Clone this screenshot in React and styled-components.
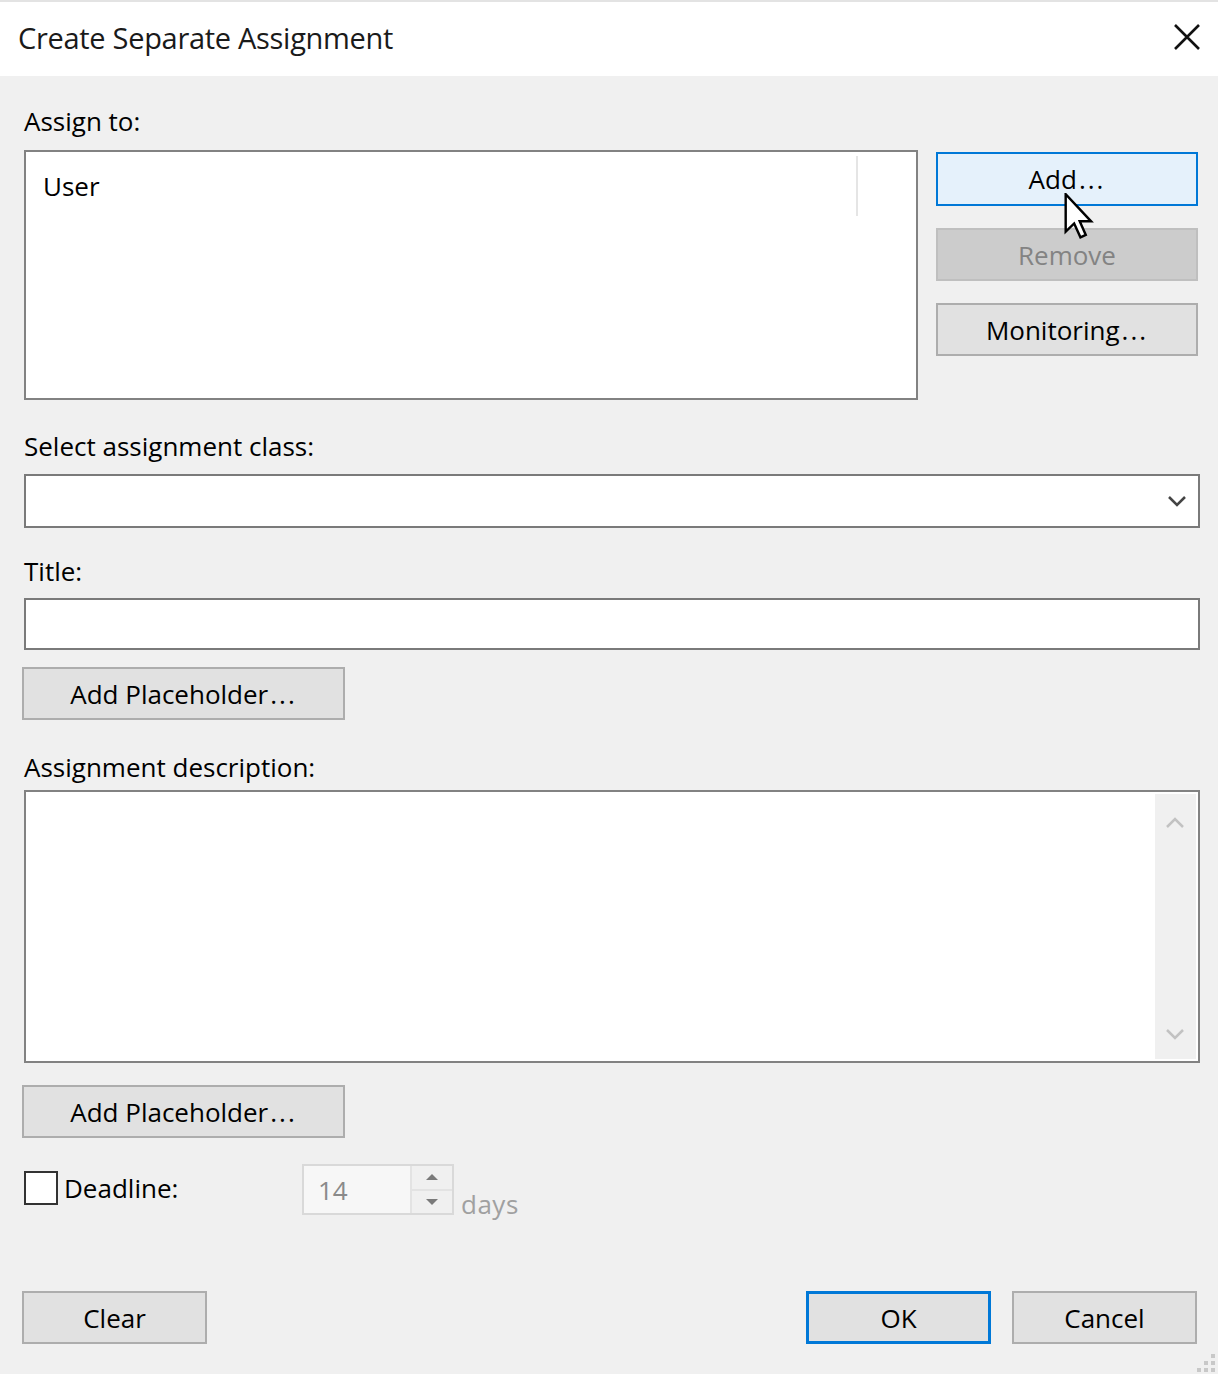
import styled, { createGlobalStyle } from "styled-components";

const GlobalStyle = createGlobalStyle`
  html, body {
    margin: 0;
    padding: 0;
    background: #f0f0f0;
  }
  * {
    box-sizing: border-box;
  }
`;

const Window = styled.div`
  position: relative;
  width: 1218px;
  height: 1374px;
  display: flex;
  flex-direction: column;
  background: #f0f0f0;
  font-family: "Open Sans", "Noto Sans", sans-serif;
  color: #000;
  overflow: hidden;
`;

const TitleBar = styled.div`
  height: 76px;
  flex: none;
  display: flex;
  align-items: center;
  justify-content: space-between;
  background: #fff;
  border-top: 2px solid #e3e3e3;
  padding: 0 16px 0 18px;
`;

const TitleText = styled.div`
  font-size: 29px;
  letter-spacing: -0.3px;
  color: #1a1a1a;
  margin-top: -4px;
`;

const CloseButton = styled.div`
  width: 30px;
  height: 30px;
  display: flex;
  align-items: center;
  justify-content: center;
  margin-top: -4px;
`;

const Body = styled.div`
  flex: 1;
  display: flex;
  flex-direction: column;
  padding: 27px 18px 0 24px;
`;

const Label = styled.div`
  font-size: 26px;
  line-height: 36px;
  height: 36px;
  margin-top: ${(p) => p.$mt || 0}px;
  margin-bottom: ${(p) => p.$mb || 0}px;
`;

const Dots = styled.span`
  letter-spacing: 2px;
  margin-left: 2px;
`;

const TopRow = styled.div`
  display: flex;
  gap: 18px;
  align-items: flex-start;
`;

const ListBox = styled.div`
  position: relative;
  width: 894px;
  height: 250px;
  background: #fff;
  border: 2px solid #828282;
  padding: 16px 0 0 17px;
  font-size: 26px;
`;

const ColumnSeparator = styled.div`
  position: absolute;
  left: 830px;
  top: 4px;
  width: 2px;
  height: 60px;
  background: #e5e5e5;
`;

const SideButtons = styled.div`
  display: flex;
  flex-direction: column;
  gap: 22px;
  padding-top: 2px;
  position: relative;
`;

const Button = styled.div`
  width: ${(p) => p.$w || 262}px;
  height: ${(p) => p.$h || 53}px;
  display: flex;
  align-items: center;
  justify-content: center;
  font-size: 26px;
  background: ${(p) =>
    p.$hover ? "#e5f1fb" : p.$disabled ? "#cccccc" : "#e1e1e1"};
  border: ${(p) =>
    p.$hover
      ? "2px solid #0078d7"
      : p.$default
      ? "3px solid #0078d7"
      : p.$disabled
      ? "2px solid #bfbfbf"
      : "2px solid #adadad"};
  color: ${(p) => (p.$disabled ? "#838383" : "#000")};
`;

const Cursor = styled.svg`
  position: absolute;
  left: 128px;
  top: 43px;
`;

const ComboBox = styled.div`
  height: 54px;
  background: #fff;
  border: 2px solid #7a7a7a;
  display: flex;
  align-items: center;
  justify-content: flex-end;
  padding-right: 10px;
`;

const TextInput = styled.div`
  height: 52px;
  background: #fff;
  border: 2px solid #7a7a7a;
`;

const PlaceholderRow = styled.div`
  margin-left: -2px;
  margin-top: ${(p) => p.$mt || 0}px;
`;

const TextArea = styled.div`
  height: 273px;
  background: #fff;
  border: 2px solid #828282;
  display: flex;
  justify-content: flex-end;
  padding: 2px;
`;

const ScrollBar = styled.div`
  width: 41px;
  background: #f0f0f0;
  display: flex;
  flex-direction: column;
  justify-content: space-between;
  align-items: center;
  padding: 18px 2px 14px 0;
`;

const DeadlineRow = styled.div`
  display: flex;
  align-items: flex-start;
  margin-top: 26px;
  height: 52px;
`;

const CheckLabel = styled.div`
  display: flex;
  align-items: center;
  gap: 6px;
  width: 278px;
  margin-top: 6px;
  font-size: 26px;
`;

const CheckBox = styled.div`
  width: 34px;
  height: 34px;
  background: #fff;
  border: 2px solid #333;
`;

const Spinner = styled.div`
  width: 152px;
  height: 51px;
  display: flex;
  border: 2px solid #d9d9d9;
  background: #f7f7f7;
`;

const SpinValue = styled.div`
  flex: 1;
  display: flex;
  align-items: center;
  padding-left: 14px;
  font-size: 26px;
  color: #8a8a8a;
`;

const SpinButtons = styled.div`
  width: 42px;
  display: flex;
  flex-direction: column;
  background: #f0f0f0;
  border-left: 2px solid #e3e3e3;
`;

const SpinHalf = styled.div`
  flex: 1;
  display: flex;
  align-items: center;
  justify-content: center;
  border-top: ${(p) => (p.$lower ? "2px solid #e3e3e3" : "none")};
`;

const Days = styled.div`
  font-size: 26px;
  color: #a0a0a0;
  margin: 22px 0 0 7px;
  letter-spacing: 0.5px;
`;

const Footer = styled.div`
  display: flex;
  align-items: center;
  margin: 75px 3px 0 -2px;
`;

const Spacer = styled.div`
  flex: 1;
`;

const FooterRight = styled.div`
  display: flex;
  gap: 21px;
`;

const SizeGrip = styled.svg`
  position: absolute;
  right: 0;
  bottom: 0;
`;

function Chevron({ dir = "down", color = "#444", size = 22 }) {
  const d = dir === "down" ? "M3 7 L11 15 L19 7" : "M3 15 L11 7 L19 15";
  return (
    <svg width={size} height={size} viewBox="0 0 22 22">
      <path d={d} fill="none" stroke={color} strokeWidth="2.5" />
    </svg>
  );
}

function Triangle({ up }) {
  return (
    <svg width="14" height="8" viewBox="0 0 14 8">
      <path d={up ? "M1 7 L7 1 L13 7 Z" : "M1 1 L7 7 L13 1 Z"} fill="#7a7a7a" />
    </svg>
  );
}

export default function App() {
  return (
    <>
      <GlobalStyle />
      <Window>
        <TitleBar>
          <TitleText>Create Separate Assignment</TitleText>
          <CloseButton>
            <svg width="28" height="28" viewBox="0 0 28 28">
              <path d="M2 2 L26 26 M26 2 L2 26" stroke="#111" strokeWidth="2.6" />
            </svg>
          </CloseButton>
        </TitleBar>

        <Body>
          <Label $mb={11}>Assign to:</Label>
          <TopRow>
            <ListBox>
              User
              <ColumnSeparator />
            </ListBox>
            <SideButtons>
              <Button $hover $h={54}>
                Add<Dots>...</Dots>
              </Button>
              <Button $disabled>Remove</Button>
              <Button>
                Monitoring<Dots>...</Dots>
              </Button>
              <Cursor width="30" height="46" viewBox="0 0 12 19">
                <path
                  d="M0.5 0.5 L0.5 16 L4 12.6 L6.6 18.3 L8.8 17.3 L6.3 11.7 L11 11.7 Z"
                  fill="#fff"
                  stroke="#000"
                  strokeWidth="1"
                  strokeLinejoin="miter"
                />
              </Cursor>
            </SideButtons>
          </TopRow>

          <Label $mt={28} $mb={10}>Select assignment class:</Label>
          <ComboBox>
            <Chevron dir="down" color="#444" />
          </ComboBox>

          <Label $mt={25} $mb={9}>Title:</Label>
          <TextInput />

          <PlaceholderRow $mt={17}>
            <Button $w={323}>
              Add Placeholder<Dots>...</Dots>
            </Button>
          </PlaceholderRow>

          <Label $mt={29} $mb={5}>Assignment description:</Label>
          <TextArea>
            <ScrollBar>
              <Chevron dir="up" color="#c2c2c2" />
              <Chevron dir="down" color="#c2c2c2" />
            </ScrollBar>
          </TextArea>

          <PlaceholderRow $mt={22}>
            <Button $w={323}>
              Add Placeholder<Dots>...</Dots>
            </Button>
          </PlaceholderRow>

          <DeadlineRow>
            <CheckLabel>
              <CheckBox />
              Deadline:
            </CheckLabel>
            <Spinner>
              <SpinValue>14</SpinValue>
              <SpinButtons>
                <SpinHalf>
                  <Triangle up />
                </SpinHalf>
                <SpinHalf $lower>
                  <Triangle />
                </SpinHalf>
              </SpinButtons>
            </Spinner>
            <Days>days</Days>
          </DeadlineRow>

          <Footer>
            <Button $w={185}>Clear</Button>
            <Spacer />
            <FooterRight>
              <Button $w={185} $default>OK</Button>
              <Button $w={185}>Cancel</Button>
            </FooterRight>
          </Footer>
        </Body>

        <SizeGrip width="24" height="24" viewBox="0 0 24 24">
          {[
            [17, 4],
            [17, 11],
            [10, 11],
            [17, 18],
            [10, 18],
            [3, 18],
          ].map(([x, y]) => (
            <rect key={`${x}-${y}`} x={x} y={y} width="4" height="4" fill="#c8c8c8" />
          ))}
        </SizeGrip>
      </Window>
    </>
  );
}
